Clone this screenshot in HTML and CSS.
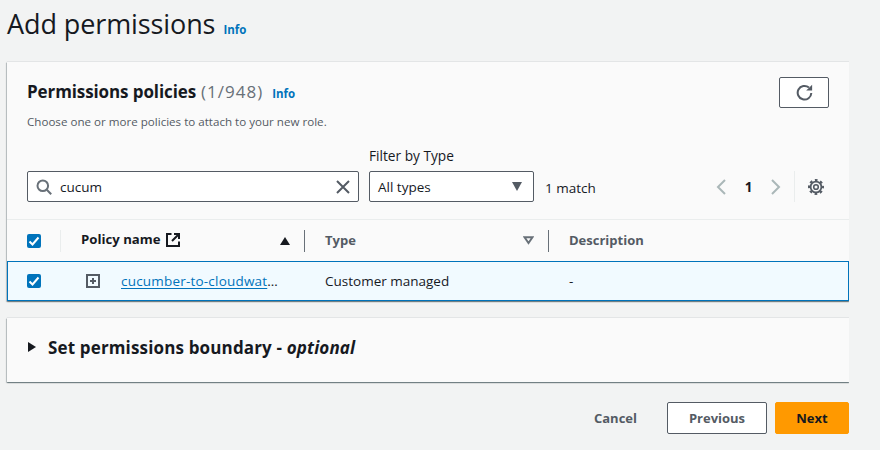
FILE: index.html
```html
<!DOCTYPE html>
<html lang="en">

<head>
    <meta charset="UTF-8">
    <title>Add permissions</title>
    <link rel="stylesheet" href="styles.css">
</head>

<body>
    <div class="page-head">
        <h1>Add permissions</h1>
        <a class="info info-head">Info</a>
    </div>

    <section class="card">
        <div class="card-top">
            <div>
                <div class="card-title">
                    <h2>Permissions policies</h2>
                    <span class="count">(1/948)</span>
                    <a class="info">Info</a>
                </div>
                <p class="card-desc">Choose one or more policies to attach to your new role.</p>
            </div>
            <button class="btn-refresh">
                <svg width="17" height="17" viewBox="0 0 16 16" fill="none" stroke="#545b64" stroke-width="1.9">
                    <path d="M14.4 8.4a6.4 6.4 0 1 1-2.2-5"/>
                    <path d="M9.6 6h5.6V.6z" fill="#545b64" stroke="none"/>
                </svg>
            </button>
        </div>

        <div class="filters">
            <div class="search">
                <svg width="16" height="16" viewBox="0 0 16 16" fill="none" stroke="#687078" stroke-width="2">
                    <circle cx="6.8" cy="6.8" r="5.3"/>
                    <path d="M10.8 10.8l4.4 4.4"/>
                </svg>
                <span class="search-text">cucum</span>
                <svg class="search-x" width="14" height="14" viewBox="0 0 14 14" fill="none" stroke="#545b64" stroke-width="2">
                    <path d="M1 1l12 12M13 1L1 13"/>
                </svg>
            </div>
            <div class="filter-type">
                <label>Filter by Type</label>
                <div class="select">
                    <span>All types</span>
                    <span class="select-caret"></span>
                </div>
            </div>
            <span class="matches">1 match</span>
            <div class="pager">
                <svg width="12" height="16" viewBox="0 0 12 16" fill="none" stroke="#aab7b8" stroke-width="2"><path d="M10 1L3 8l7 7"/></svg>
                <span class="page-no">1</span>
                <svg width="12" height="16" viewBox="0 0 12 16" fill="none" stroke="#aab7b8" stroke-width="2"><path d="M2 1l7 7-7 7"/></svg>
                <span class="pager-line"></span>
                <svg width="16" height="16" viewBox="0 0 16 16" fill="none" stroke="#545b64">
                    <circle cx="8" cy="8" r="2.3" stroke-width="1.6"/>
                    <circle cx="8" cy="8" r="5.4" stroke-width="1.8"/>
                    <circle cx="8" cy="8" r="6.9" stroke-width="2.2" stroke-dasharray="2.7 2.72" stroke-dashoffset="1.35"/>
                </svg>
            </div>
        </div>

        <div class="table-row table-head">
            <div class="col-check"><span class="check"><svg width="14" height="14" viewBox="0 0 14 14" fill="none" stroke="#fff" stroke-width="2"><path d="M2.5 7.5l3 3 6-7"/></svg></span><span class="check-line"></span></div>
            <div class="col-name">
                <span class="th-strong">Policy name</span>
                <svg class="th-link" width="14" height="14" viewBox="0 0 14 14" fill="none" stroke="#16191f" stroke-width="2">
                    <path d="M5.5 1H1v12h12V8.5"/>
                    <path d="M6 8l6.5-6.5M8 1h5v5"/>
                </svg>
                <span class="sort-up"></span>
            </div>
            <div class="col-type">
                <span class="th-label">Type</span>
                <svg class="sort-down" width="11" height="9" viewBox="0 0 11 9" fill="none" stroke="#687078" stroke-width="2"><path d="M1.5 1.2h8L5.5 7z"/></svg>
            </div>
            <div class="col-desc"><span class="th-label">Description</span></div>
        </div>

        <div class="table-row row-selected">
            <div class="col-check"><span class="check"><svg width="14" height="14" viewBox="0 0 14 14" fill="none" stroke="#fff" stroke-width="2"><path d="M2.5 7.5l3 3 6-7"/></svg></span></div>
            <div class="col-name">
                <svg class="expand" width="14" height="14" viewBox="0 0 14 14" fill="none" stroke="#545b64">
                    <rect x="1" y="1" width="12" height="12" stroke-width="2"/>
                    <path d="M7 4v6M4 7h6" stroke-width="2"/>
                </svg>
                <div class="policy"><a>cucumber-to-cloudwat</a>…</div>
            </div>
            <div class="col-type">Customer managed</div>
            <div class="col-desc">-</div>
        </div>
    </section>

    <section class="card card-boundary">
        <span class="tri"></span>
        <h3>Set permissions boundary - <em>optional</em></h3>
    </section>

    <div class="actions">
        <a class="btn-link">Cancel</a>
        <button class="btn btn-prev">Previous</button>
        <button class="btn btn-next">Next</button>
    </div>
</body>

</html>
```

FILE: styles.css
```css
body {
    margin: 0;
    width: 842px;
    height: 450px;
    padding-left: 7px;
    overflow: hidden;
    font-family: "Open Sans", "Noto Sans", sans-serif;
    font-size: 13.5px;
    color: #16191f;
    background-color: #f2f3f3;
}

h1,
h2,
h3,
p {
    margin: 0;
}

.info {
    font-size: 11.5px;
    font-weight: 700;
    color: #0073bb;
}

.page-head {
    height: 62px;
    display: flex;
    align-items: flex-start;
}

h1 {
    font-size: 27px;
    font-weight: 400;
    line-height: 48px;
    letter-spacing: -0.1px;
}

.info-head {
    margin: 22px 0 0 8px;
}

.card {
    background-color: #fafafa;
    box-shadow: 0 0 1px 0 rgba(0, 28, 36, 0.35), 0 1px 1px 0 rgba(0, 28, 36, 0.3), 1px 1px 1px 0 rgba(0, 28, 36, 0.15), -1px 1px 1px 0 rgba(0, 28, 36, 0.15);
}

.card-top {
    display: flex;
    justify-content: space-between;
    padding: 15px 20px 0;
    height: 68px;
}

.card-title {
    display: flex;
    align-items: baseline;
    margin-top: 3px;
    height: 29px;
}

h2 {
    font-size: 17px;
    font-weight: 700;
    letter-spacing: -0.1px;
}

.count {
    font-size: 17px;
    letter-spacing: 1px;
    color: #687078;
    margin-left: 5px;
}

.card-title .info {
    margin-left: 9px;
}

.card-desc {
    font-size: 11.6px;
    color: #545b64;
    margin-top: 5px;
}

.btn-refresh {
    width: 50px;
    height: 31px;
    padding: 0;
    border: 1px solid #545b64;
    border-radius: 2px;
    background-color: #fff;
    display: flex;
    align-items: center;
    justify-content: center;
}

.filters {
    display: flex;
    align-items: flex-end;
    padding: 0 20px;
    height: 60px;
    margin-top: -3px;
}

.search {
    width: 332px;
    height: 31px;
    box-sizing: border-box;
    display: flex;
    align-items: center;
    padding: 0 8px;
    border: 1px solid #545b64;
    border-radius: 2px;
    background-color: #fff;
}

.search-text {
    margin-left: 8px;
}

.search-x {
    margin-left: auto;
}

.filter-type {
    margin-left: 10px;
}

.filter-type label {
    display: block;
    font-size: 13.7px;
    margin-bottom: 6px;
}

.select {
    width: 165px;
    height: 31px;
    box-sizing: border-box;
    display: flex;
    align-items: center;
    justify-content: space-between;
    padding: 0 11px 0 8px;
    border: 1px solid #545b64;
    border-radius: 2px;
    background-color: #fff;
}

.select-caret {
    width: 0;
    height: 0;
    border-left: 5.5px solid transparent;
    border-right: 5.5px solid transparent;
    border-top: 9px solid #545b64;
}

.matches {
    margin-left: 11px;
    margin-bottom: -2px;
    line-height: 31px;
}

.pager {
    margin-left: auto;
    padding-right: 5px;
    height: 31px;
    display: flex;
    align-items: center;
}

.page-no {
    width: 43px;
    text-align: center;
    font-weight: 700;
}

.pager-line {
    width: 1px;
    height: 31px;
    margin: 0 13px 0 12px;
    background-color: #eaeded;
}

.table-row {
    display: flex;
    align-items: center;
}

.table-head {
    height: 42px;
    margin-top: 17px;
    border-top: 1px solid #eaeded;
    box-sizing: border-box;
}

.col-check {
    width: 74px;
    padding-left: 20px;
    box-sizing: border-box;
    display: flex;
    align-items: center;
}

.check {
    width: 14px;
    height: 14px;
    border-radius: 2px;
    background-color: #0073bb;
    display: flex;
}

.check-line {
    width: 1px;
    height: 22px;
    margin-left: 19px;
    background-color: #eaeded;
}

.col-name {
    width: 224px;
    box-sizing: border-box;
    display: flex;
    align-items: center;
}

.th-strong {
    font-size: 13.2px;
    font-weight: 700;
    margin-bottom: 3px;
}

.th-link {
    margin-left: 5px;
    margin-bottom: 2px;
}

.th-label {
    font-size: 13px;
    font-weight: 700;
    color: #545b64;
    margin-bottom: 1px;
}

.sort-up {
    width: 0;
    height: 0;
    margin-left: auto;
    margin-right: 14px;
    border-left: 5px solid transparent;
    border-right: 5px solid transparent;
    border-bottom: 8px solid #16191f;
}

.table-head .col-name {
    height: 22px;
    border-right: 1px solid #687078;
}

.table-head .col-type {
    height: 22px;
    border-right: 1px solid #687078;
    display: flex;
    align-items: center;
}

.col-type {
    width: 244px;
    box-sizing: border-box;
    padding-left: 20px;
}

.sort-down {
    margin-left: auto;
    margin-right: 14px;
}

.col-desc {
    padding-left: 20px;
}

.table-head .col-desc {
    display: flex;
}

.row-selected {
    height: 40px;
    box-sizing: border-box;
    border: 1px solid #0073bb;
    background-color: #f1faff;
}

.row-selected .col-check {
    width: 73px;
    padding-left: 19px;
}

.expand {
    margin-left: 5px;
    flex-shrink: 0;
}

.policy {
    margin-left: 21px;
    white-space: nowrap;
    letter-spacing: 0.2px;
}

.policy a {
    color: #0073bb;
    text-decoration: underline;
    text-underline-offset: 2px;
}

.card-boundary {
    margin-top: 17px;
    height: 64px;
    display: flex;
    align-items: center;
    padding: 0 0 6px 21px;
    box-sizing: border-box;
}

.tri {
    width: 0;
    height: 0;
    border-top: 5px solid transparent;
    border-bottom: 5px solid transparent;
    border-left: 8px solid #16191f;
}

h3 {
    margin-left: 12px;
    font-size: 17px;
    font-weight: 700;
    letter-spacing: 0.15px;
}

.actions {
    display: flex;
    justify-content: flex-end;
    align-items: center;
    margin-top: 20px;
}

.btn-link {
    font-size: 13px;
    font-weight: 700;
    color: #545b64;
    margin-right: 30px;
}

.btn {
    height: 32px;
    box-sizing: border-box;
    border-radius: 2px;
    font-family: inherit;
    font-size: 13px;
    font-weight: 700;
    padding: 0;
}

.btn-prev {
    width: 100px;
    margin-right: 8px;
    border: 1px solid #545b64;
    background-color: #fff;
    color: #545b64;
}

.btn-next {
    width: 74px;
    border: 1px solid #ff9900;
    background-color: #ff9900;
    color: #16191f;
}
```
